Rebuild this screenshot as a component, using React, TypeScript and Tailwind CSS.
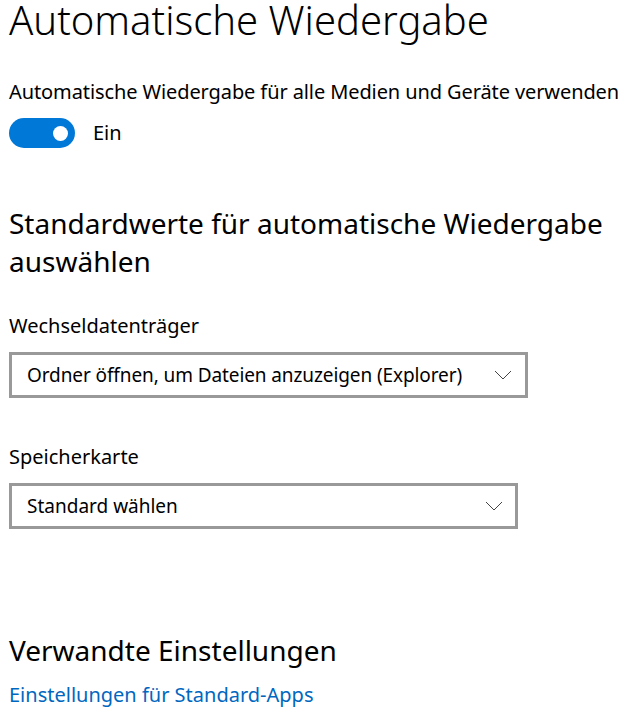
import React from "react";

function Chevron() {
  return (
    <svg width="18" height="10" viewBox="0 0 18 10" fill="none">
      <path d="M1 1 L9 9 L17 1" stroke="#444" strokeWidth="1" />
    </svg>
  );
}

export default function App() {
  return (
    <div
      className="w-[622px] h-[716px] bg-white text-black overflow-hidden pl-[9px]"
      style={{ fontFamily: '"Noto Sans", "Open Sans", sans-serif' }}
    >
      <h1 className="text-[40px] leading-[40px] font-light whitespace-nowrap">Automatische Wiedergabe</h1>
      <p className="text-[20px] leading-[28px] mt-[38px] whitespace-nowrap tracking-[-0.1px]">Automatische Wiedergabe für alle Medien und Geräte verwenden</p>
      <div className="flex items-center mt-[12px]">
        <div className="w-[66px] h-[30px] rounded-full bg-[#0078d7] flex items-center justify-end pr-[7px]">
          <div className="w-[15px] h-[15px] rounded-full bg-white" />
        </div>
        <span className="text-[20px] ml-[18px]">Ein</span>
      </div>
      <h2 className="text-[28px] leading-[38px] mt-[56px] pr-[10px]">Standardwerte für automatische Wiedergabe auswählen</h2>
      <p className="text-[20px] leading-[28px] mt-[32px]">Wechseldatenträger</p>
      <div className="mt-[12px] w-[519px] h-[46px] border-[3px] border-[#999] flex items-center justify-between pl-[15px] pr-[13px]">
        <span className="text-[19px] tracking-[-0.1px]">Ordner öffnen, um Dateien anzuzeigen (Explorer)</span>
        <Chevron />
      </div>
      <p className="text-[20px] leading-[28px] mt-[45px]">Speicherkarte</p>
      <div className="mt-[12px] w-[509px] h-[46px] border-[3px] border-[#999] flex items-center justify-between pl-[15px] pr-[12px]">
        <span className="text-[19px]">Standard wählen</span>
        <Chevron />
      </div>
      <h2 className="text-[28px] leading-[38px] mt-[102px]">Verwandte Einstellungen</h2>
      <a className="block text-[20px] leading-[28px] mt-[12px] text-[#0067c0]">Einstellungen für Standard-Apps</a>
    </div>
  );
}
